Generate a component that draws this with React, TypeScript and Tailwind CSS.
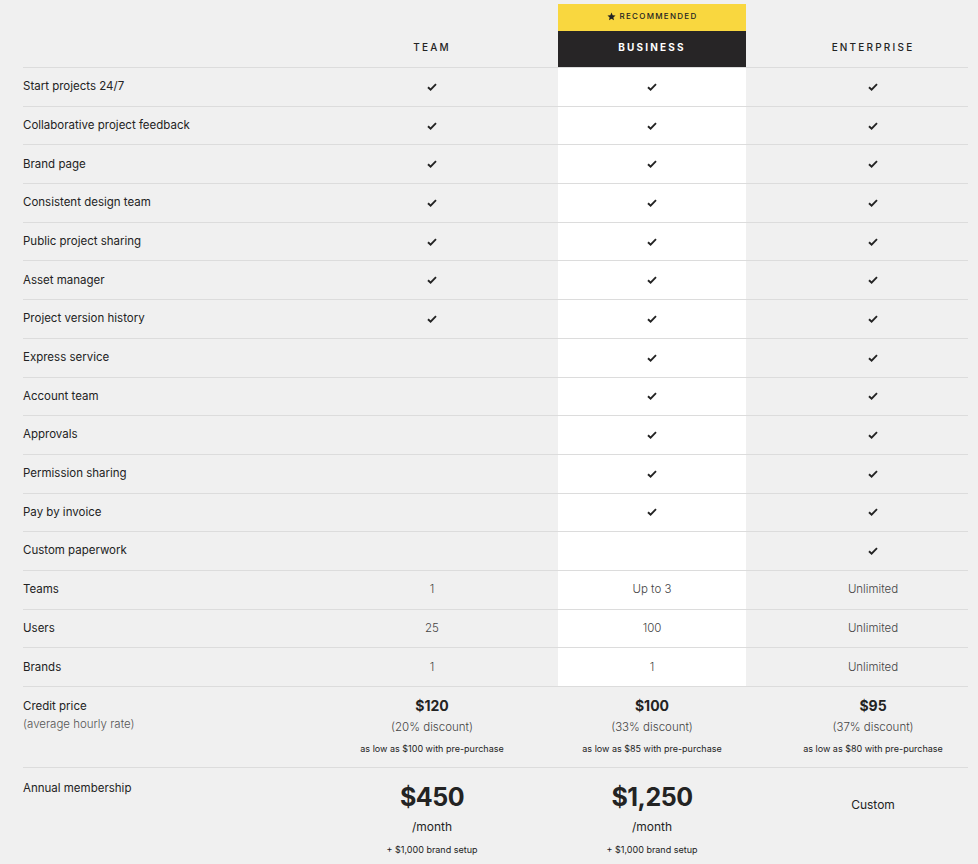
import React from 'react';

const features = [
  { name: 'Start projects 24/7', team: true, business: true, enterprise: true },
  { name: 'Collaborative project feedback', team: true, business: true, enterprise: true },
  { name: 'Brand page', team: true, business: true, enterprise: true },
  { name: 'Consistent design team', team: true, business: true, enterprise: true },
  { name: 'Public project sharing', team: true, business: true, enterprise: true },
  { name: 'Asset manager', team: true, business: true, enterprise: true },
  { name: 'Project version history', team: true, business: true, enterprise: true },
  { name: 'Express service', team: false, business: true, enterprise: true },
  { name: 'Account team', team: false, business: true, enterprise: true },
  { name: 'Approvals', team: false, business: true, enterprise: true },
  { name: 'Permission sharing', team: false, business: true, enterprise: true },
  { name: 'Pay by invoice', team: false, business: true, enterprise: true },
  { name: 'Custom paperwork', team: false, business: false, enterprise: true },
];

const limits = [
  { name: 'Teams', team: '1', business: 'Up to 3', enterprise: 'Unlimited' },
  { name: 'Users', team: '25', business: '100', enterprise: 'Unlimited' },
  { name: 'Brands', team: '1', business: '1', enterprise: 'Unlimited' },
];

const credits = [
  { price: '$120', discount: '(20% discount)', low: 'as low as $100 with pre-purchase' },
  { price: '$100', discount: '(33% discount)', low: 'as low as $85 with pre-purchase' },
  { price: '$95', discount: '(37% discount)', low: 'as low as $80 with pre-purchase' },
];

const grid = 'grid grid-cols-[283px_188px_188px_190px] gap-x-8';

const Check = () => (
  <svg width="10" height="8" viewBox="0 0 10 8" className="text-[#232323]">
    <path d="M1 4.2 L3.6 6.6 L9 1.2" fill="none" stroke="currentColor" strokeWidth="1.9" />
  </svg>
);

const Star = () => (
  <svg width="9" height="9" viewBox="0 0 24 24" className="text-[#232323]">
    <path
      d="M12 1.5l3.1 7.1 7.7.7-5.8 5.1 1.7 7.6L12 18l-6.7 4 1.7-7.6-5.8-5.1 7.7-.7z"
      fill="currentColor"
    />
  </svg>
);

const App = () => {
  return (
    <div
      className="min-h-[864px] w-full bg-[#f0f0f0] text-[#232323]"
      style={{ fontFamily: 'Inter, "Noto Sans", sans-serif' }}
    >
      <div className="pl-[23px] pr-[10px] pt-1">
        {/* Plan header */}
        <div className={`${grid} items-end`}>
          <div />
          <div className="h-9 pb-1 flex items-center justify-center text-[10px] tracking-[0.22em] font-medium">
            TEAM
          </div>
          <div className="flex flex-col">
            <div className="h-[27px] pb-[3px] bg-[#f9d73f] flex items-center justify-center gap-1 text-[8px] tracking-[0.16em] font-medium">
              <Star />
              RECOMMENDED
            </div>
            <div className="h-9 pb-1 bg-[#272526] text-white flex items-center justify-center text-[10px] tracking-[0.22em] font-bold">
              BUSINESS
            </div>
          </div>
          <div className="h-9 pb-1 flex items-center justify-center text-[10px] tracking-[0.22em] font-medium">
            ENTERPRISE
          </div>
        </div>

        {/* Feature rows */}
        {features.map((f) => (
          <div key={f.name} className={`${grid} h-[38.7px] border-t border-[#dcdcdc]`}>
            <div className="flex items-center text-[11.5px]">{f.name}</div>
            <div className="flex items-center justify-center">{f.team && <Check />}</div>
            <div className="flex items-center justify-center bg-white">{f.business && <Check />}</div>
            <div className="flex items-center justify-center">{f.enterprise && <Check />}</div>
          </div>
        ))}

        {/* Limits */}
        {limits.map((l) => (
          <div key={l.name} className={`${grid} h-[38.7px] border-t border-[#dcdcdc] text-[11.5px]`}>
            <div className="flex items-center">{l.name}</div>
            <div className="flex items-center justify-center font-light text-[#444]">{l.team}</div>
            <div className="flex items-center justify-center bg-white font-light text-[#444]">{l.business}</div>
            <div className="flex items-center justify-center font-light text-[#444]">{l.enterprise}</div>
          </div>
        ))}

        {/* Credit price */}
        <div className={`${grid} h-[81px] border-t border-[#dcdcdc] pt-[9px]`}>
          <div className="text-[11.5px] leading-[18px] pt-px">
            <div>Credit price</div>
            <div className="font-light text-[#555]">(average hourly rate)</div>
          </div>
          {credits.map((c) => (
            <div key={c.price} className="flex flex-col items-center">
              <div className="text-[14px] font-bold leading-[20px]">{c.price}</div>
              <div className="text-[11.5px] font-light text-[#444] leading-[22px]">{c.discount}</div>
              <div className="text-[9px] leading-[22px]">{c.low}</div>
            </div>
          ))}
        </div>

        {/* Annual membership */}
        <div className={`${grid} border-t border-[#dcdcdc] pt-[11px] pb-2`}>
          <div className="text-[11.5px] leading-[18px]">Annual membership</div>
          {['$450', '$1,250'].map((p) => (
            <div key={p} className="flex flex-col items-center">
              <div className="text-[25px] font-bold leading-[36px] tracking-[-0.02em]">{p}</div>
              <div className="text-[12px] leading-[24px]">/month</div>
              <div className="text-[9px] leading-[22px]">+ $1,000 brand setup</div>
            </div>
          ))}
          <div className="flex justify-center pt-[17px] text-[12px]">Custom</div>
        </div>
      </div>
    </div>
  );
};

export default App;
